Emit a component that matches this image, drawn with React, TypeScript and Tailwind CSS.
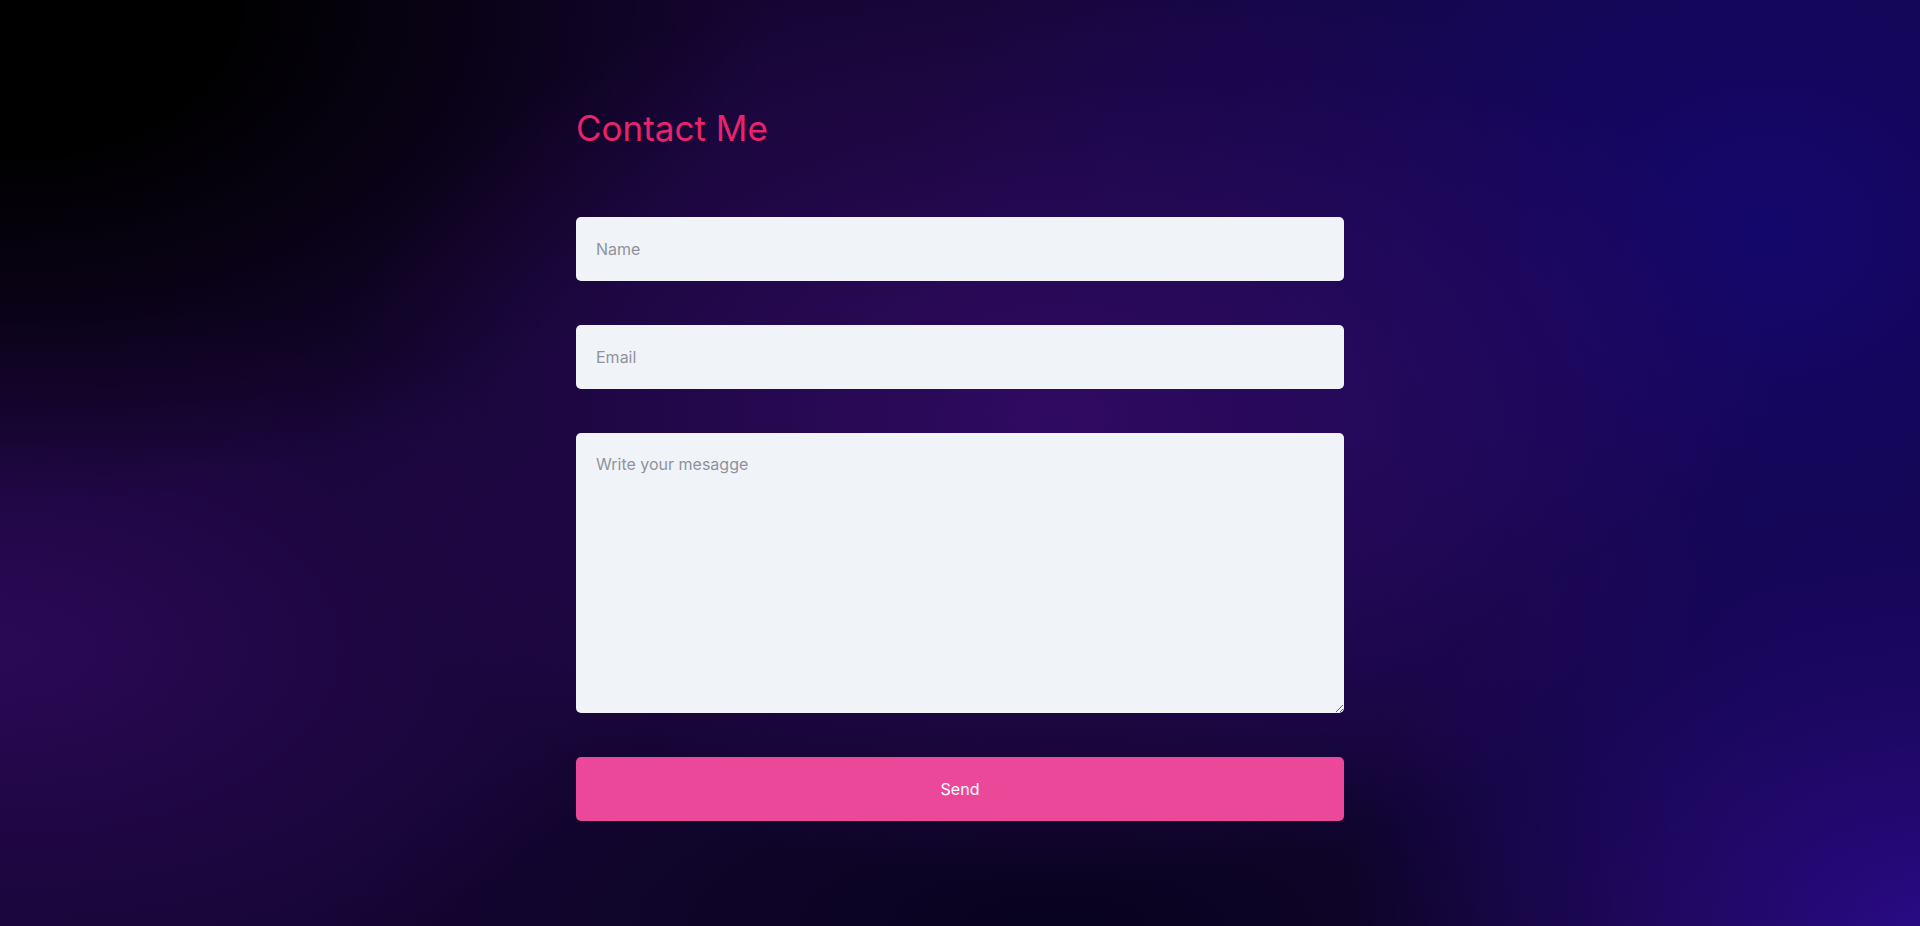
const fields = [
  { name: "name", type: "text", placeholder: "Name" },
  { name: "email", type: "email", placeholder: "Email" },
];

export default function App() {
  return (
    <div className="min-h-screen w-full bg-[#150533] bg-[radial-gradient(ellipse_38%_50%_at_55%_45%,#300a62_0%,transparent_100%),radial-gradient(ellipse_40%_55%_at_0%_0%,#000000_0%,#000000_30%,transparent_100%),radial-gradient(ellipse_45%_80%_at_92%_25%,#14076c_0%,transparent_100%),radial-gradient(ellipse_30%_50%_at_100%_100%,#2a0a85_0%,transparent_100%),radial-gradient(ellipse_35%_40%_at_0%_70%,#2a0855_0%,transparent_100%),radial-gradient(ellipse_40%_30%_at_55%_100%,#08031f_0%,transparent_100%)] font-['Inter',sans-serif]">
      <div className="mx-auto w-[768px] pt-[106px] pb-[96px]">
        <h1 className="text-[35px] leading-[44px] font-normal text-[#e8236c]">
          Contact Me
        </h1>
        <form className="mt-[67px] flex flex-col gap-[44px]">
          {fields.map((f) => (
            <input
              key={f.name}
              type={f.type}
              name={f.name}
              placeholder={f.placeholder}
              className="h-[64px] w-full rounded-[5px] bg-[#f0f4f9] px-5 text-[16px] text-slate-700 placeholder:text-[#8f929c] outline-none"
            />
          ))}
          <textarea
            name="message"
            placeholder="Write your mesagge"
            className="h-[280px] w-full rounded-[5px] bg-[#f0f4f9] px-5 py-[19px] text-[16px] leading-6 text-slate-700 placeholder:text-[#8f929c] outline-none"
          />
          <button
            type="button"
            className="h-[64px] w-full rounded-[5px] bg-[#ec4899] text-[16px] text-white"
          >
            Send
          </button>
        </form>
      </div>
    </div>
  );
}
